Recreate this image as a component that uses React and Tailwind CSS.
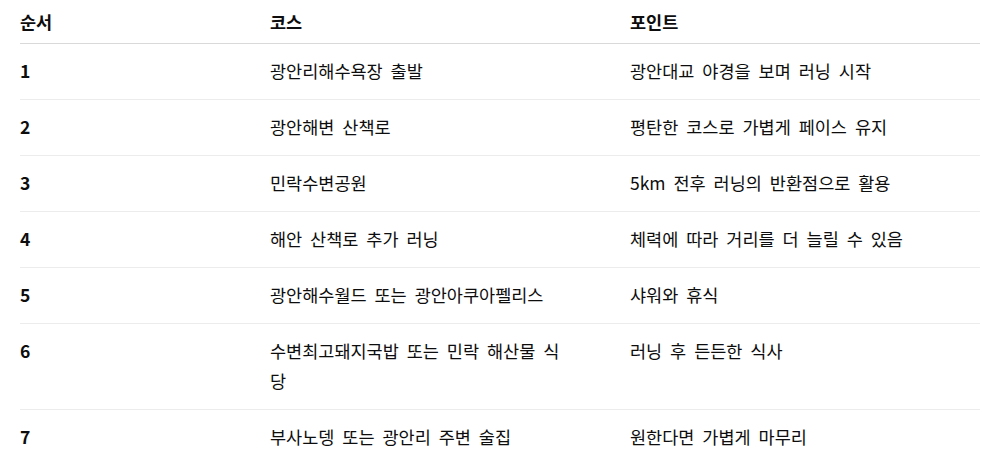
export default function App() {
  const rows = [
    ["1", "광안리해수욕장 출발", "광안대교 야경을 보며 러닝 시작"],
    ["2", "광안해변 산책로", "평탄한 코스로 가볍게 페이스 유지"],
    ["3", "민락수변공원", "5km 전후 러닝의 반환점으로 활용"],
    ["4", "해안 산책로 추가 러닝", "체력에 따라 거리를 더 늘릴 수 있음"],
    ["5", "광안해수월드 또는 광안아쿠아펠리스", "샤워와 휴식"],
    ["6", "수변최고돼지국밥 또는 민락 해산물 식당", "러닝 후 든든한 식사"],
    ["7", "부사노뎅 또는 광안리 주변 술집", "원한다면 가볍게 마무리"],
  ];
  const font = { fontFamily: '"Noto Sans CJK KR", "Noto Sans", sans-serif' };
  return (
    <div className="w-[996px] h-[470px] bg-white overflow-hidden" style={font}>
      <table className="ml-5 w-[960px] table-fixed border-collapse text-[17.5px] leading-[30px] text-[#0d0d0d] [word-spacing:4px]">
        <colgroup>
          <col className="w-[250px]" />
          <col className="w-[360px]" />
          <col className="w-[350px]" />
        </colgroup>
        <thead>
          <tr className="border-b border-[#d9d9d9]">
            <th className="pt-[7px] pb-[6px] pr-12 text-left font-bold">순서</th>
            <th className="pt-[7px] pb-[6px] pr-[60px] text-left font-bold">코스</th>
            <th className="pt-[7px] pb-[6px] pr-12 text-left font-bold">포인트</th>
          </tr>
        </thead>
        <tbody>
          {rows.map((r, i) => (
            <tr key={i} className={i < rows.length - 1 ? "border-b border-[#ececec]" : ""}>
              <td className="pt-3 pb-[13px] pr-12 align-top font-bold">{r[0]}</td>
              <td className="pt-3 pb-[13px] pr-[60px] align-top">{r[1]}</td>
              <td className="pt-3 pb-[13px] pr-12 align-top">{r[2]}</td>
            </tr>
          ))}
        </tbody>
      </table>
    </div>
  );
}
